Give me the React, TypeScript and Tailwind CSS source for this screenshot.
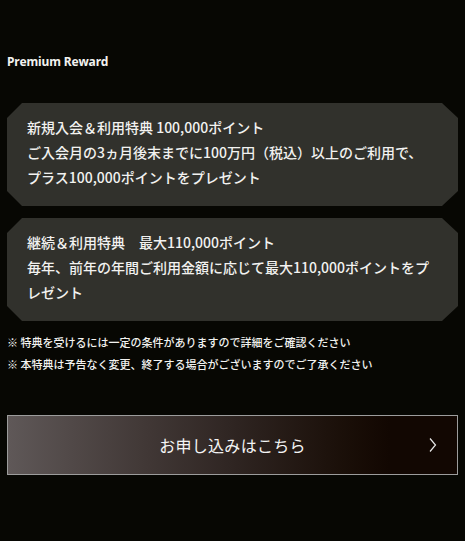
import React from 'react';

const jp = 'font-["Noto_Sans_CJK_JP","Noto_Sans",sans-serif]';

const benefits = [
  {
    id: 'new',
    lines: ['新規入会＆利用特典 100,000ポイント', 'ご入会月の3ヵ月後末までに100万円（税込）以上のご利用で、プラス100,000ポイントをプレゼント'],
  },
  {
    id: 'renew',
    lines: ['継続＆利用特典　最大110,000ポイント', '毎年、前年の年間ご利用金額に応じて最大110,000ポイントをプレゼント'],
  },
];

export default function App() {
  return (
    <div className={`min-h-[541px] w-[465px] bg-[#070703] px-[7px] pt-[54px] text-[#f2f2f0] ${jp}`}>
      {/* Heading */}
      <h2 className="font-['Noto_Sans',sans-serif] text-[12px] font-bold leading-[15px] tracking-[-0.1px]">Premium Reward</h2>

      {/* Benefit cards */}
      <div className="mt-[34px] flex flex-col gap-[12px]">
        {benefits.map((b) => (
          <div
            key={b.id}
            className="bg-[#31312c] pl-[20px] pr-[24px] pt-[12px] pb-[16px] text-[14px] leading-[25px] [clip-path:polygon(15px_0,calc(100%-16px)_0,100%_15px,100%_calc(100%-15px),calc(100%-16px)_100%,15px_100%,0_calc(100%-15px),0_15px)]"
          >
            <p className="font-medium">{b.lines[0]}</p>
            <p className="font-medium">{b.lines[1]}</p>
          </div>
        ))}
      </div>

      {/* Notes */}
      <div className="mt-[10px] text-[11px] leading-[22px] font-medium">
        <p>※ 特典を受けるには一定の条件がありますので詳細をご確認ください</p>
        <p>※ 本特典は予告なく変更、終了する場合がございますのでご了承ください</p>
      </div>

      {/* CTA */}
      <button className="relative mt-[40px] flex h-[60px] w-full items-center justify-center border border-[#9c9c9c] bg-gradient-to-r from-[#5f5858] via-[#2f2522] via-50% to-[#120702] to-85% text-[16px] font-normal tracking-[0.3px] text-[#f4f4f4]">
        お申し込みはこちら
        <svg className="absolute right-[20px] top-[21px]" width="8" height="16" viewBox="0 0 8 16" fill="none">
          <path d="M1 1.5 L6.5 8 L1 14.5" stroke="#e8e8e8" strokeWidth="1.2" />
        </svg>
      </button>
    </div>
  );
}
